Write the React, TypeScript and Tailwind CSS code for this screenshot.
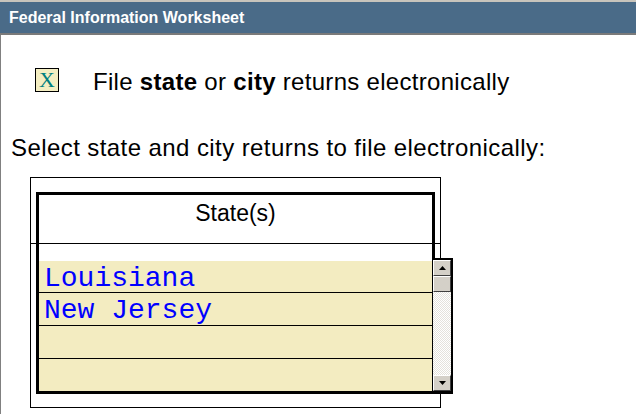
import React from 'react';

const states = ['Louisiana', 'New Jersey', '', ''];

const ScrollButton = ({ dir }: { dir: 'up' | 'down' }) => (
  <div className="h-[16px] w-full bg-[#d4d0c8] border-t border-l border-t-white border-l-white border-b border-r border-b-[#404040] border-r-[#404040] flex items-center justify-center">
    <svg width="7" height="4" viewBox="0 0 7 4">
      {dir === 'up' ? <path d="M3.5 0 L7 4 L0 4 Z" fill="#000" /> : <path d="M0 0 L7 0 L3.5 4 Z" fill="#000" />}
    </svg>
  </div>
);

export default function App() {
  return (
    <div className="w-[636px] h-[414px] bg-white overflow-hidden font-['Liberation_Sans',Arial,sans-serif]">
      {/* title bar */}
      <div className="h-[35px] border-t-2 border-t-[#c8c4bc] border-b-2 border-b-[#7a7a7a] bg-[#4a6b88] flex items-center pl-[9px]">
        <span className="text-white font-bold text-[16px] leading-none">Federal Information Worksheet</span>
      </div>

      <div className="h-[379px] border-l border-l-[#808080] flex flex-col">
        <div className="mt-[33px] pl-[34px] flex items-center h-[24px]">
          <div className="w-[24px] h-[24px] border border-black bg-[#f4eec2] flex items-center justify-center">
            <span className="text-[#008080] text-[22px] leading-none font-['Liberation_Serif',serif]">X</span>
          </div>
          <span className="ml-[34px] mt-[3px] text-[24px] leading-[28px] tracking-[0.3px] text-black">
            File <b>state</b> or <b>city</b> returns electronically
          </span>
        </div>

        <div className="mt-[42px] pl-[10px] text-[24px] leading-[28px] tracking-[0.42px] text-black">
          Select state and city returns to file electronically:
        </div>

        {/* list frame */}
        <div className="relative mt-[15px] ml-[29px] w-[411px] h-[231px] border border-black">
          <div className="absolute left-0 right-0 top-[65px] h-px bg-black z-10" />

          <div className="relative mt-[14px] ml-[5px] w-[399px] h-[202px] border-[3px] border-black flex flex-col">
            <div className="h-[30px] flex items-end justify-center">
              <span className="text-[23px] leading-none text-black">State(s)</span>
            </div>
            <div className="h-[36px]" />
            <div className="flex flex-col bg-[#f3ecc1]">
              {states.map((s, i) => (
                <div
                  key={i}
                  className={`${i === 0 || i === 3 ? 'h-[32px]' : 'h-[33px]'} ${i < 3 ? 'border-b border-black' : ''} pl-[5px] flex items-center`}
                >
                  <span className="text-[28px] leading-none text-[#0000ff] font-['Liberation_Mono','Courier_New',monospace] mt-[4px]">
                    {s}
                  </span>
                </div>
              ))}
            </div>

            {/* scrollbar */}
            <div className="absolute left-[394px] top-[63px] w-[20px] h-[136px] border-t-2 border-r-2 border-b-[3px] border-black bg-white z-20 flex flex-col">
              <ScrollButton dir="up" />
              <div className="h-[16px] w-full bg-[#d4d0c8] border-t border-l border-t-white border-l-white border-b border-r border-b-[#404040] border-r-[#404040]" />
              <div className="flex-1 bg-[repeating-conic-gradient(#e4e2dc_0_25%,#ffffff_0_50%)] bg-[length:2px_2px]" />
              <ScrollButton dir="down" />
            </div>
          </div>
        </div>
      </div>
    </div>
  );
}
